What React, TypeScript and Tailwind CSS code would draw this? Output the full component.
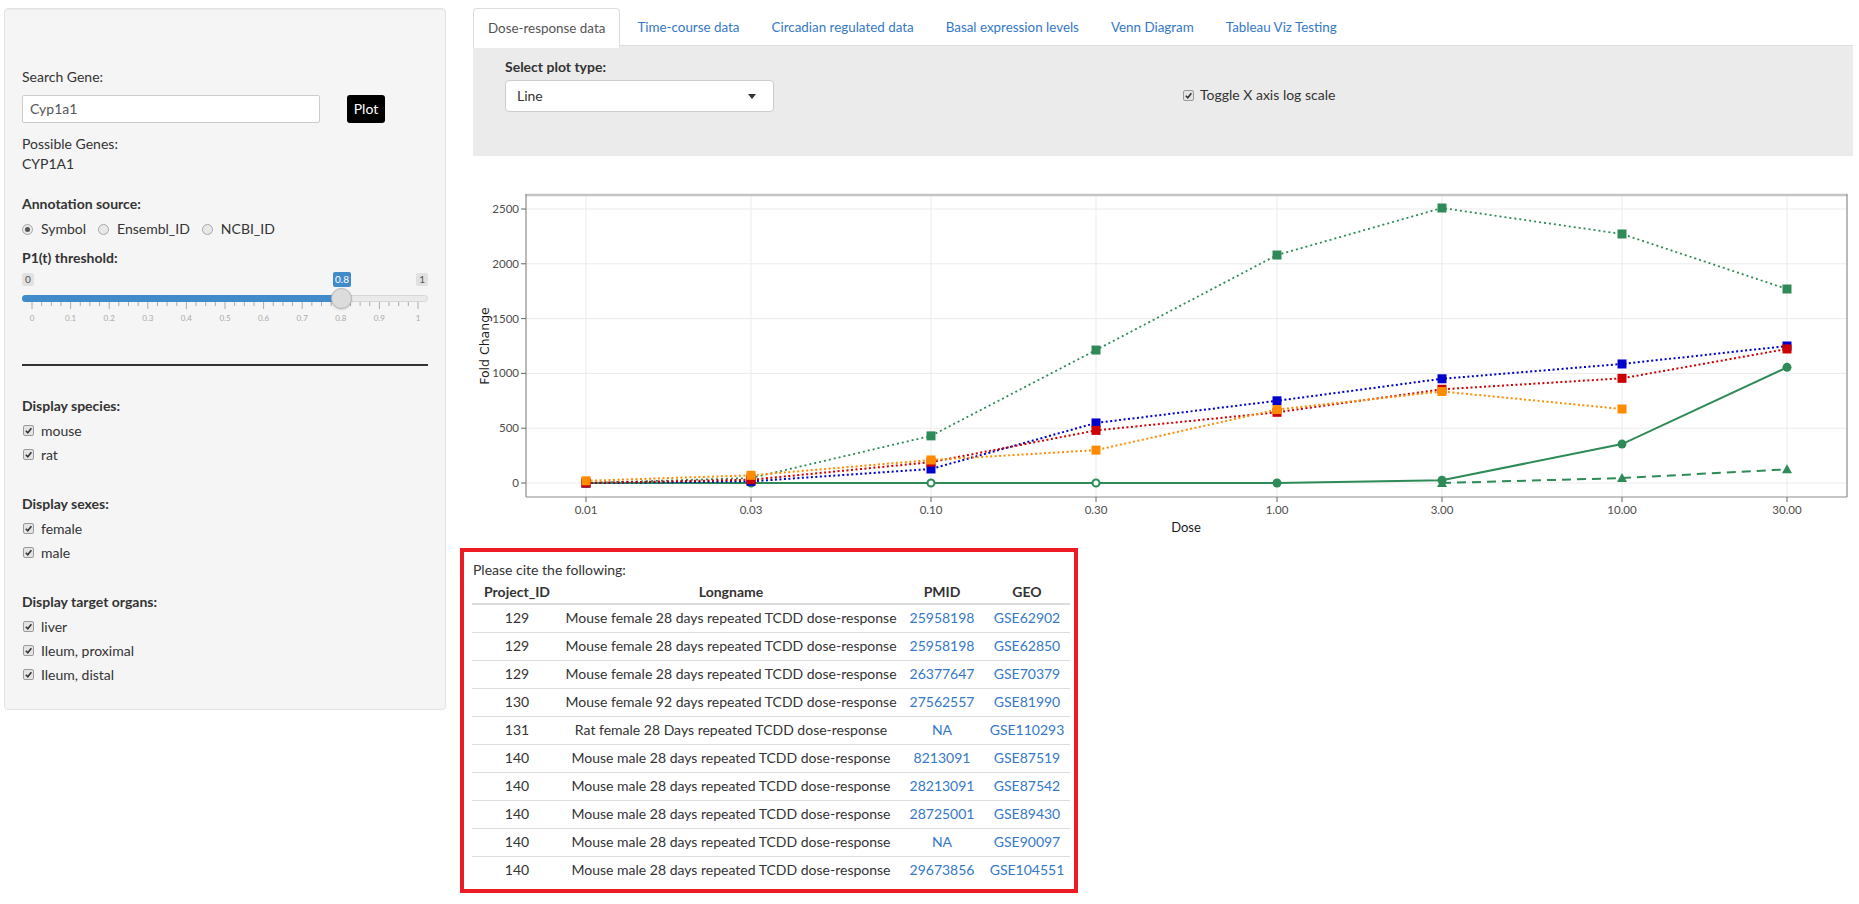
import React from "react";

const XT = [586, 751, 931, 1096, 1277, 1442, 1622, 1787];
const X_LABELS = ["0.01", "0.03", "0.10", "0.30", "1.00", "3.00", "10.00", "30.00"];
const Y_TICKS = [0, 500, 1000, 1500, 2000, 2500];
const y = (v: number) => 483 - v * 0.1096;

interface Series {
  color: string;
  dash: string;
  width: number;
  marker: "square" | "circle" | "triangle";
  values: (number | null)[];
  open?: number[];
}

const series: Series[] = [
  { color: "#2e8b57", dash: "", width: 2, marker: "circle", values: [0, 0, 0, 0, 0, 25, 355, 1055], open: [1, 2, 3] },
  { color: "#2e8b57", dash: "9,6", width: 2, marker: "triangle", values: [null, null, null, null, null, 0, 45, 125] },
  { color: "#2e8b57", dash: "2,3", width: 1.8, marker: "square", values: [0, 45, 430, 1213, 2080, 2509, 2272, 1770] },
  { color: "#0000cd", dash: "2,2.5", width: 2, marker: "square", values: [0, 15, 128, 548, 750, 951, 1086, 1250] },
  { color: "#cd0000", dash: "2,2.5", width: 2, marker: "square", values: [0, 30, 190, 480, 645, 855, 955, 1223] },
  { color: "#ff8c00", dash: "2,2.5", width: 2, marker: "square", values: [20, 70, 210, 300, 670, 835, 675, null] },
];

const rows = [
  ["129", "Mouse female 28 days repeated TCDD dose-response", "25958198", "GSE62902"],
  ["129", "Mouse female 28 days repeated TCDD dose-response", "25958198", "GSE62850"],
  ["129", "Mouse female 28 days repeated TCDD dose-response", "26377647", "GSE70379"],
  ["130", "Mouse female 92 days repeated TCDD dose-response", "27562557", "GSE81990"],
  ["131", "Rat female 28 Days repeated TCDD dose-response", "NA", "GSE110293"],
  ["140", "Mouse male 28 days repeated TCDD dose-response", "8213091", "GSE87519"],
  ["140", "Mouse male 28 days repeated TCDD dose-response", "28213091", "GSE87542"],
  ["140", "Mouse male 28 days repeated TCDD dose-response", "28725001", "GSE89430"],
  ["140", "Mouse male 28 days repeated TCDD dose-response", "NA", "GSE90097"],
  ["140", "Mouse male 28 days repeated TCDD dose-response", "29673856", "GSE104551"],
];

const tabs = [
  "Dose-response data",
  "Time-course data",
  "Circadian regulated data",
  "Basal expression levels",
  "Venn Diagram",
  "Tableau Viz Testing",
];

const Check = () => (
  <span className="w-[11px] h-[11px] rounded-[2px] border border-[#9a9a9a] bg-[#e4e4e4] flex items-center justify-center shrink-0">
    <svg width="9" height="9" viewBox="0 0 10 10">
      <path d="M2 5.3 L4.2 7.6 L8.2 2.4" stroke="#333" strokeWidth="1.7" fill="none" />
    </svg>
  </span>
);

const Radio = ({ checked }: { checked?: boolean }) => (
  <span className="w-[11px] h-[11px] rounded-full border border-[#a8a8a8] bg-[#e8e8e8] flex items-center justify-center shrink-0">
    {checked && <span className="w-[5px] h-[5px] rounded-full bg-[#555]" />}
  </span>
);

const CheckItem = ({ label }: { label: string }) => (
  <div className="flex items-center h-[20px] pl-[1px] gap-[7px]">
    <Check />
    <span>{label}</span>
  </div>
);

const Slider = () => {
  const xs = (v: number) => 10 + v * 386;
  return (
    <div className="relative h-[60px] w-[406px]">
      {/* min / max / value labels */}
      <span className="absolute left-0 top-[5px] h-[13px] px-[3px] rounded-[2px] bg-[#e1e1e1] text-[10px] leading-[13px] text-[#555]">0</span>
      <span className="absolute right-0 top-[5px] h-[13px] px-[3px] rounded-[2px] bg-[#e1e1e1] text-[10px] leading-[13px] text-[#555]">1</span>
      <span className="absolute left-[311px] top-[4px] h-[15px] w-[18px] rounded-[2px] bg-[#428bca] text-[10px] leading-[15px] text-white text-center">0.8</span>
      {/* track */}
      <div className="absolute left-0 right-0 top-[27px] h-[7px] rounded-full bg-[#eaeaea] border border-[#d6d6d6]" />
      <div className="absolute left-0 top-[27px] h-[7px] w-[320px] rounded-l-full bg-[#428bca]" />
      <svg className="absolute left-0 top-[34px]" width="406" height="26">
        {Array.from({ length: 41 }).map((_, i) => (
          <line key={i} x1={xs(i / 40)} x2={xs(i / 40)} y1={0} y2={i % 4 === 0 ? 7 : 4} stroke="#aaa" strokeWidth="1" />
        ))}
        {Array.from({ length: 11 }).map((_, i) => (
          <text key={i} x={xs(i / 10)} y={19} textAnchor="middle" fontSize="8" fill="#aaa" fontFamily="Lato, sans-serif">
            {i === 0 ? "0" : i === 10 ? "1" : (i / 10).toFixed(1)}
          </text>
        ))}
      </svg>
      {/* handle */}
      <div className="absolute left-[309px] top-[20px] w-[21px] h-[21px] rounded-full bg-[#dcdcdc] border border-[#b5b5b5] shadow-sm" />
    </div>
  );
};

const Chart = () => {
  return (
    <svg width="1380" height="384" className="block">
      <g transform="translate(-473,-156)" fontFamily="Lato, sans-serif">
        {/* grid */}
        {Y_TICKS.map((t) => (
          <line key={t} x1={526} x2={1847} y1={y(t)} y2={y(t)} stroke="#ebebeb" strokeWidth="1" />
        ))}
        {XT.map((x) => (
          <line key={x} x1={x} x2={x} y1={194} y2={497} stroke="#ebebeb" strokeWidth="1" />
        ))}
        {/* panel border */}
        <line x1={526} x2={1847} y1={195} y2={195} stroke="#c4c4c4" strokeWidth="2.5" />
        <line x1={526} x2={526} y1={194} y2={497} stroke="#8c8c8c" strokeWidth="1.2" />
        <line x1={526} x2={1847} y1={497} y2={497} stroke="#8c8c8c" strokeWidth="1.2" />
        <line x1={1847} x2={1847} y1={194} y2={497} stroke="#8c8c8c" strokeWidth="1.2" />
        {/* y ticks */}
        {Y_TICKS.map((t) => (
          <g key={t}>
            <line x1={521} x2={526} y1={y(t)} y2={y(t)} stroke="#666" strokeWidth="1" />
            <text x={519} y={y(t) + 4} textAnchor="end" fontSize="11.5" fill="#4d4d4d">
              {t}
            </text>
          </g>
        ))}
        {/* x ticks */}
        {XT.map((x, i) => (
          <g key={x}>
            <line x1={x} x2={x} y1={497} y2={502} stroke="#666" strokeWidth="1" />
            <text x={x} y={514} textAnchor="middle" fontSize="11.5" fill="#4d4d4d">
              {X_LABELS[i]}
            </text>
          </g>
        ))}
        <text x={1186} y={532} textAnchor="middle" fontSize="13" fill="#1a1a1a">
          Dose
        </text>
        <text
          x={485}
          y={346}
          textAnchor="middle"
          fontSize="12.5"
          fill="#1a1a1a"
          fontFamily="DejaVu Sans, sans-serif"
          transform="rotate(-90 485 346)"
          dominantBaseline="middle"
        >
          Fold Change
        </text>
        {/* data */}
        {series.map((s, si) => {
          const pts = s.values
            .map((v, i) => (v === null ? null : [XT[i], y(v)]))
            .filter((p): p is number[] => p !== null);
          const d = pts.map((p, i) => `${i === 0 ? "M" : "L"}${p[0]},${p[1]}`).join(" ");
          return (
            <g key={si}>
              <path d={d} fill="none" stroke={s.color} strokeWidth={s.width} strokeDasharray={s.dash || undefined} />
              {s.values.map((v, i) => {
                if (v === null) return null;
                const cx = XT[i];
                const cy = y(v);
                if (s.marker === "square")
                  return <rect key={i} x={cx - 4.5} y={cy - 4.5} width={9} height={9} fill={s.color} />;
                if (s.marker === "triangle")
                  return <path key={i} d={`M${cx},${cy - 5} L${cx + 5},${cy + 4} L${cx - 5},${cy + 4} Z`} fill={s.color} />;
                const open = s.open?.includes(i);
                return (
                  <circle
                    key={i}
                    cx={cx}
                    cy={cy}
                    r={open ? 3.5 : 4.5}
                    fill={open ? "#fff" : s.color}
                    stroke={s.color}
                    strokeWidth={open ? 2 : 0}
                  />
                );
              })}
            </g>
          );
        })}
      </g>
    </svg>
  );
};

export default function App() {
  return (
    <div className="min-h-screen w-[1859px] bg-white flex items-start font-[Lato,sans-serif] text-[14px] leading-[20px] text-[#333]">
      {/* Sidebar */}
      <aside className="ml-[4px] mt-[8px] w-[442px] bg-[#f5f5f5] border border-[#e3e3e3] rounded-[4px] shadow-[inset_0_1px_1px_rgba(0,0,0,0.05)] pl-[17px] pr-[17px] pt-[58px] pb-[24px]">
        <div>Search Gene:</div>
        <div className="flex items-center mt-[8px]">
          <div className="w-[298px] h-[28px] bg-white border border-[#ccc] rounded-[2px] px-[7px] flex items-center text-[#555]">
            Cyp1a1
          </div>
          <button className="ml-[27px] h-[28px] w-[38px] bg-black text-white rounded-[3px] text-[14px]">Plot</button>
        </div>
        <div className="mt-[11px]">Possible Genes:</div>
        <div>CYP1A1</div>

        <div className="mt-[20px] font-bold">Annotation source:</div>
        <div className="mt-[5px] flex items-center h-[20px]">
          <label className="flex items-center gap-[8px] mr-[12px]">
            <Radio checked />
            <span>Symbol</span>
          </label>
          <label className="flex items-center gap-[8px] mr-[12px]">
            <Radio />
            <span>Ensembl_ID</span>
          </label>
          <label className="flex items-center gap-[8px]">
            <Radio />
            <span>NCBI_ID</span>
          </label>
        </div>

        <div className="mt-[9px] font-bold">P1(t) threshold:</div>
        <Slider />

        <div className="mt-[36px] h-[1.5px] bg-[#333] w-[406px]" />

        <div className="mt-[30px] font-bold">Display species:</div>
        <div className="mt-[5px] flex flex-col gap-[4px]">
          <CheckItem label="mouse" />
          <CheckItem label="rat" />
        </div>

        <div className="mt-[29px] font-bold">Display sexes:</div>
        <div className="mt-[5px] flex flex-col gap-[4px]">
          <CheckItem label="female" />
          <CheckItem label="male" />
        </div>

        <div className="mt-[29px] font-bold">Display target organs:</div>
        <div className="mt-[5px] flex flex-col gap-[4px]">
          <CheckItem label="liver" />
          <CheckItem label="Ileum, proximal" />
          <CheckItem label="Ileum, distal" />
        </div>
      </aside>

      {/* Main panel */}
      <main className="ml-[27px] w-[1380px] mt-[8px]">
        <ul className="flex h-[38px] border-b border-[#ddd] text-[13.4px]">
          {tabs.map((t, i) =>
            i === 0 ? (
              <li
                key={t}
                className="h-[38px] px-[14px] flex items-center bg-white border border-[#ddd] border-b-white rounded-t-[4px] mr-[2px] text-[#555] -mb-px box-content"
              >
                {t}
              </li>
            ) : (
              <li key={t} className="h-[38px] px-[15px] flex items-center mr-[2px] text-[#3478c8]">
                {t}
              </li>
            )
          )}
        </ul>

        <div className="h-[110px] bg-[#ebebeb] flex">
          <div className="w-[710px] pl-[32px] pt-[11px]">
            <div className="font-bold">Select plot type:</div>
            <div className="mt-[3px] w-[269px] h-[32px] bg-white border border-[#ccc] rounded-[4px] flex items-center justify-between pl-[11px] pr-[17px]">
              <span>Line</span>
              <svg width="8" height="5" viewBox="0 0 8 5">
                <path d="M0 0 L8 0 L4 5 Z" fill="#333" />
              </svg>
            </div>
          </div>
          <div className="pt-[39px]">
            <div className="flex items-center gap-[6px] h-[20px]">
              <Check />
              <span>Toggle X axis log scale</span>
            </div>
          </div>
        </div>

        <Chart />

        <div className="-ml-[13px] mt-[8px] w-[618px] border-[4px] border-[#ed1c24] bg-white pl-[8px] pr-[4px] pt-[8px] pb-[5px]">
          <div className="pl-[1px]">Please cite the following:</div>
          <table className="w-[598px] border-collapse text-center">
            <thead>
              <tr className="h-[24px] border-b-2 border-[#ddd]">
                <th className="w-[90px] font-bold">Project_ID</th>
                <th className="w-[338px] font-bold">Longname</th>
                <th className="w-[84px] font-bold">PMID</th>
                <th className="w-[86px] font-bold">GEO</th>
              </tr>
            </thead>
            <tbody>
              {rows.map((r, i) => (
                <tr key={i} className={`h-[28px] ${i < rows.length - 1 ? "border-b border-[#ddd]" : ""}`}>
                  <td>{r[0]}</td>
                  <td>{r[1]}</td>
                  <td className="text-[#3478c8]">{r[2]}</td>
                  <td className="text-[#3478c8]">{r[3]}</td>
                </tr>
              ))}
            </tbody>
          </table>
        </div>
      </main>
    </div>
  );
}
